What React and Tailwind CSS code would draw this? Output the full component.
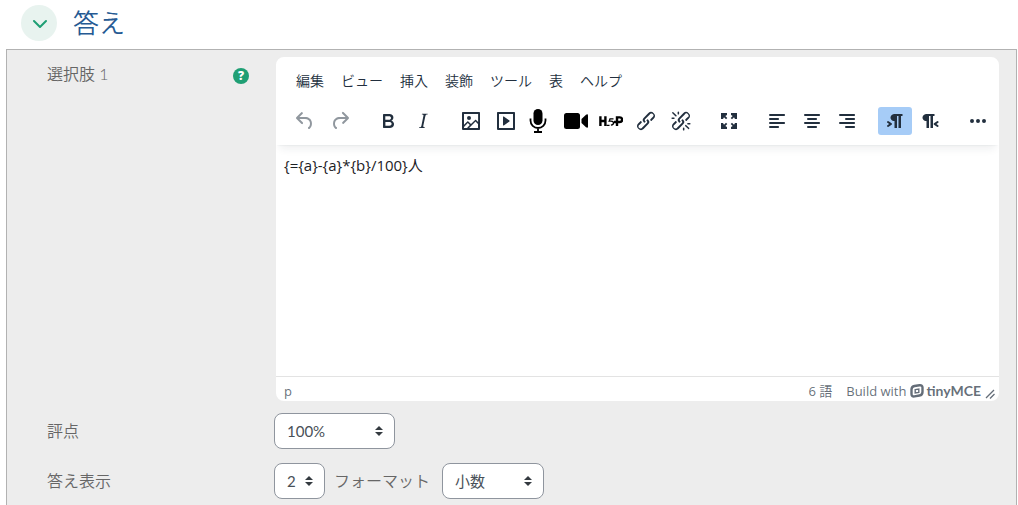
import React from "react";

const ALIGN = "h14c.6 0 1 .4 1 1s-.4 1-1 1";

const ICONS = {
  undo: "M6.4 8H12c3.7 0 6.2 2 6.8 5.1.6 2.7-.4 5.6-2.3 6.8a1 1 0 0 1-1-1.8c1.1-.6 1.8-2.7 1.4-4.6-.5-2.1-2.1-3.5-4.9-3.5H6.4l3.3 3.3a1 1 0 1 1-1.4 1.4l-5-5a1 1 0 0 1 0-1.4l5-5a1 1 0 0 1 1.4 1.4L6.4 8Z",
  redo: "M17.6 10H12c-2.8 0-4.4 1.4-4.9 3.5-.4 2 .3 4 1.4 4.6a1 1 0 1 1-1 1.8c-2-1.2-2.9-4.1-2.3-6.8.6-3 3-5.1 6.8-5.1h5.6l-3.3-3.3a1 1 0 1 1 1.4-1.4l5 5a1 1 0 0 1 0 1.4l-5 5a1 1 0 0 1-1.4-1.4l3.3-3.3Z",
  bold: "M7.8 19c-.3 0-.5 0-.6-.2l-.2-.5V5.7c0-.2 0-.4.2-.5l.6-.2h5c1.5 0 2.7.3 3.5 1 .7.6 1.1 1.4 1.1 2.5a3 3 0 0 1-.6 1.9c-.4.6-1 1-1.6 1.2.4.1.9.3 1.3.6s.8.7 1 1.2c.4.4.5 1 .5 1.6 0 1.3-.4 2.3-1.3 3-.8.7-2.1 1-3.8 1H7.8Zm5-8.3c.6 0 1.2-.1 1.6-.5.4-.3.6-.7.6-1.3 0-1.1-.8-1.7-2.3-1.7H9.3v3.5h3.4Zm.5 6c.7 0 1.3-.1 1.7-.4.4-.4.6-.9.6-1.5s-.2-1-.7-1.4c-.4-.3-1-.4-2-.4H9.4v3.8h4Z",
  italic: "m16.7 4.7-.1.9h-.3c-.6 0-1 0-1.4.3-.3.3-.4.6-.5 1.1l-2.1 9.8v.6c0 .5.4.8 1.4.8h.2l-.2.8H8l.2-.8h.2c1.1 0 1.8-.5 2-1.5l2-9.8.1-.5c0-.6-.4-.8-1.4-.8h-.3l.2-.9h5.8Z",
  image: "m5 15.7 3.3-3.2c.3-.3.7-.3 1 0L12 15l4.1-4c.3-.4.8-.4 1 0l2 1.9V5H5v10.7ZM5 18V19h3l2.8-2.9-2-2L5 17.9Zm14-3-2.5-2.4-6.4 6.5H19v-4ZM4 3h16c.6 0 1 .4 1 1v16c0 .6-.4 1-1 1H4a1 1 0 0 1-1-1V4c0-.6.4-1 1-1Zm6 8a2 2 0 1 0 0-4 2 2 0 0 0 0 4Z",
  media: "M4 3h16c.6 0 1 .4 1 1v16c0 .6-.4 1-1 1H4a1 1 0 0 1-1-1V4c0-.6.4-1 1-1Zm1 2v14h14V5H5Zm4.8 2.6 5.6 4a.5.5 0 0 1 0 .8l-5.6 4A.5.5 0 0 1 9 16V8a.5.5 0 0 1 .8-.4Z",
  link: "M6.2 12.3a1 1 0 0 1 1.4 1.4l-2 2a2 2 0 1 0 2.6 2.8l4.8-4.8a1 1 0 0 0 0-1.4 1 1 0 1 1 1.4-1.3 2.9 2.9 0 0 1 0 4L9.6 20a3.9 3.9 0 0 1-5.5-5.5l2-2Zm11.6-.6a1 1 0 0 1-1.4-1.4l2-2a2 2 0 1 0-2.6-2.8L11 10.3a1 1 0 0 0 0 1.4A1 1 0 1 1 9.6 13a2.9 2.9 0 0 1 0-4L14.4 4a3.9 3.9 0 0 1 5.5 5.5l-2 2Z",
  unlink: "M6.2 12.3a1 1 0 0 1 1.4 1.4l-2 2a2 2 0 1 0 2.6 2.8l4.8-4.8a1 1 0 0 0 0-1.4 1 1 0 1 1 1.4-1.3 2.9 2.9 0 0 1 0 4L9.6 20a3.9 3.9 0 0 1-5.5-5.5l2-2Zm11.6-.6a1 1 0 0 1-1.4-1.4l2.1-2a2 2 0 1 0-2.7-2.8L11 10.3a1 1 0 0 0 0 1.4A1 1 0 1 1 9.6 13a2.9 2.9 0 0 1 0-4L14.4 4a3.9 3.9 0 0 1 5.5 5.5l-2 2ZM7.6 6.3a.8.8 0 0 1-1 1.1L3.3 4.2a.7.7 0 1 1 1-1l3.2 3.1ZM5.1 8.6a.8.8 0 0 1 0 1.5H3a.8.8 0 0 1 0-1.5H5Zm5-3.5a.8.8 0 0 1-1.5 0V3a.8.8 0 0 1 1.5 0V5Zm6 11.8a.8.8 0 0 1 1-1l3.2 3.2a.8.8 0 0 1-1 1L16 17Zm-2.2 2a.8.8 0 0 1 1.5 0V21a.8.8 0 0 1-1.5 0V19Zm5-3.5a.7.7 0 1 1 0-1.5H21a.8.8 0 0 1 0 1.5H19Z",
  fullscreen: "M4 4h6v2L8.300 7l2 2L9 10.300l-2-2L6 10H4ZM20 4v6h-2l-1-1.700-2 2L13.700 9l2-2L14 6V4ZM4 20v-6h2l1 1.700 2-2 1.300 1.300-2 2 1.700 1v2ZM20 20h-6v-2l1.700-1-2-2 1.300-1.300 2 2 1-1.700h2Z",
  left: `M5 5${ALIGN}H5a1 1 0 1 1 0-2ZM5 9h8c.6 0 1 .4 1 1s-.4 1-1 1H5a1 1 0 1 1 0-2ZM5 13${ALIGN}H5a1 1 0 0 1 0-2ZM5 17h8c.6 0 1 .4 1 1s-.4 1-1 1H5a1 1 0 0 1 0-2Z`,
  center: `M5 5${ALIGN}H5a1 1 0 1 1 0-2ZM8 9h8c.6 0 1 .4 1 1s-.4 1-1 1H8a1 1 0 1 1 0-2ZM5 13${ALIGN}H5a1 1 0 0 1 0-2ZM8 17h8c.6 0 1 .4 1 1s-.4 1-1 1H8a1 1 0 0 1 0-2Z`,
  right: `M5 5${ALIGN}H5a1 1 0 1 1 0-2ZM11 9h8c.6 0 1 .4 1 1s-.4 1-1 1h-8a1 1 0 1 1 0-2ZM5 13${ALIGN}H5a1 1 0 0 1 0-2ZM11 17h8c.6 0 1 .4 1 1s-.4 1-1 1h-8a1 1 0 0 1 0-2Z`,
  ltr: "M11 5h8.500v2H18v12h-2.500V7h-1.500v12h-2.500v-7c-.5 0-1.400 0-1.900-.3A3.400 3.400 0 0 1 7.800 10a3.300 3.300 0 0 1 0-2.800 3.400 3.400 0 0 1 1.800-1.800L11 5ZM4.400 16.200 6.200 15l-1.800-1.200a1 1 0 0 1 1.200-1.600l3 2a1 1 0 0 1 0 1.600l-3 2a1 1 0 1 1-1.200-1.600Z",
  rtl: "M8 5h8.500v2H15v12h-2.500V7H11v12H8.500v-7c-.5 0-1.400 0-1.900-.3A3.400 3.400 0 0 1 4.800 10a3.300 3.300 0 0 1 0-2.800 3.400 3.400 0 0 1 1.800-1.800L8 5Zm12.200 11.200a1 1 0 1 1-1.200 1.600l-3-2a1 1 0 0 1 0-1.600l3-2a1 1 0 1 1 1.200 1.600L18.400 15l1.800 1.200Z",
  more: "M6 10a2 2 0 1 0 0 4 2 2 0 0 0 0-4Zm12 0a2 2 0 1 0 0 4 2 2 0 0 0 0-4Zm-6 0a2 2 0 1 0 0 4 2 2 0 0 0 0-4Z",
};

const GROUPS = [
  [["undo", "元に戻す"], ["redo", "やり直し"]],
  [["bold", "太字"], ["italic", "斜体"]],
  [["image", "画像"], ["media", "メディア"], ["mic", "音声を録音"], ["video", "動画を録画"], ["h5p", "H5P"], ["link", "リンク"], ["unlink", "リンク解除"]],
  [["fullscreen", "全画面"]],
  [["left", "左揃え"], ["center", "中央揃え"], ["right", "右揃え"]],
  [["ltr", "左から右"], ["rtl", "右から左"]],
  [["more", "さらに表示"]],
];

function Icon({ name }) {
  if (name === "mic")
    return (
      <svg width="24" height="24" viewBox="0 0 24 24" className="text-black" aria-hidden="true">
        <rect x="4.500" y="0" width="9" height="16" rx="4.500" fill="currentColor" />
        <path d="M1.500 9.500V11.500a7.500 7.500 0 0 0 15 0V9.500M9 19v4M5 23h8" fill="none" stroke="currentColor" strokeWidth="1.800" />
      </svg>
    );
  if (name === "video")
    return (
      <svg width="24" height="24" viewBox="0 0 24 24" className="text-black" fill="currentColor" aria-hidden="true">
        <rect x="0" y="4" width="16" height="16" rx="2.500" />
        <path d="M17.500 10 22 5.800q2-1.300 2 .8v10.800q0 2.100-2 .8L17.500 14Z" />
      </svg>
    );
  if (name === "h5p")
    return (
      <svg width="24" height="24" viewBox="0 0 24 24" className="text-black" fill="none" stroke="currentColor" aria-hidden="true">
        <path d="M1.400 7.200v9.800M6.400 7.200v9.800M1.400 12h5" strokeWidth="2.400" />
        <path d="M7.500 16.400h3M14.500 9.800h-3.500l-.8 2.400q4.300-.6 4.300 1.800 0 1.800-2.600 2.200" strokeWidth="1.300" />
        <path d="M18 17V8.400h2.800a2.200 2.200 0 0 1 0 4.600H15" strokeWidth="2.400" />
      </svg>
    );
  return (
    <svg width="24" height="24" viewBox="0 0 24 24" fill="currentColor" fillRule="evenodd" aria-hidden="true">
      <path d={ICONS[name]} />
    </svg>
  );
}

function ToolButton({ name, label }) {
  const disabled = name === "undo" || name === "redo";
  const active = name === "ltr";
  return (
    <button
      type="button"
      aria-label={label}
      aria-pressed={active || undefined}
      disabled={disabled}
      className={`flex h-7 w-[34px] items-center justify-center rounded-[3px] ${active ? "bg-[#a6ccf7]" : ""} ${disabled ? "text-[#222f3e]/50" : "text-[#222f3e]"}`}
    >
      <Icon name={name} />
    </button>
  );
}

function Select({ id, label, value, className }) {
  return (
    <div className={`relative ${className}`}>
      <select
        id={id}
        aria-label={label}
        defaultValue={value}
        className="block h-9 w-full appearance-none rounded-lg border border-[#8f959e] bg-white pl-3 text-[15px] font-normal text-[#495057]"
      >
        <option>{value}</option>
      </select>
      <svg className="pointer-events-none absolute top-[13px] right-3 h-[10px] w-2 text-[#343a40]" viewBox="0 0 8 10" fill="currentColor" aria-hidden="true">
        <path d="M4 0 0 4h8ZM4 10 0 6h8Z" />
      </svg>
    </div>
  );
}

function Editor() {
  return (
    <div className="overflow-hidden rounded-[10px] border-2 border-[#ededed] bg-white font-['Open_Sans','Noto_Sans_CJK_JP',sans-serif]">
      <div className="relative shadow-[0_2px_2px_-2px_rgba(34,47,62,0.1),0_8px_8px_-4px_rgba(34,47,62,0.07)]">
        <div className="flex h-12 items-center gap-[9px] px-4 text-sm text-[#222f3e]">
          {["編集", "ビュー", "挿入", "装飾", "ツール", "表", "ヘルプ"].map((m) => (
            <button key={m} type="button" className="px-1">
              {m}
            </button>
          ))}
        </div>
        <div className="flex h-10 items-start gap-[14px] px-3 pt-[2px]">
          {GROUPS.map((g) => (
            <div key={g[0][0]} className="flex gap-px">
              {g.map(([name, label]) => (
                <ToolButton key={name} name={name} label={label} />
              ))}
            </div>
          ))}
        </div>
      </div>
      <textarea
        id="choice"
        defaultValue="{={a}-{a}*{b}/100}人"
        className="block h-[231px] w-full resize-none px-2 py-2 text-[15px] leading-6 font-normal text-[#1d2125] outline-none"
      />
      <div className="flex h-[25px] items-end border-t border-[#e3e3e3] pr-1 pl-2 text-[13px] leading-5 font-normal text-[#222f3e]/70">
        <span>p</span>
        <span className="ml-auto">6 語</span>
        <a href="#tinymce" className="ml-[14px] flex items-center gap-1">
          Build with
          <span className="flex items-center gap-[2px] text-sm leading-5 font-bold font-[Lato]">
            <svg width="14" height="14" viewBox="0 0 14 14" fill="none" stroke="currentColor" aria-hidden="true">
              <path d="M4.500 2 9.500 1.300q3-.3 3 2.200v4.500q0 3-3 3.500L4.500 12.400q-3 .4-3-2.400V5.500q0-3 3-3.500Z" strokeWidth="2.400" />
              <path d="M5.200 5.600 8.800 5v3.400L5.200 9Z" strokeWidth="1.400" />
            </svg>
            tinyMCE
          </span>
        </a>
        <svg className="mb-[2px] ml-1 h-[10px] w-[10px]" viewBox="0 0 10 10" fill="none" stroke="currentColor" aria-hidden="true">
          <path d="M1 9 9 1M5 9.500 9.500 5" strokeWidth="1.300" />
        </svg>
      </div>
    </div>
  );
}

export default function App() {
  return (
    <main className="flex min-h-screen flex-col bg-white font-[Lato,'Noto_Sans_CJK_JP',sans-serif] text-[#666666]">
      <header className="mb-2 flex items-center gap-4 pt-[5px] pl-[21px]">
        <button type="button" aria-label="折りたたむ" aria-expanded="true" className="flex h-9 w-9 items-center justify-center rounded-full bg-[#e8f3ef]">
          <svg width="16" height="16" viewBox="0 0 16 16" fill="none" stroke="#1f9f74" strokeWidth="2" aria-hidden="true">
            <path d="m3 6 6 6 6-6" strokeLinecap="round" strokeLinejoin="round" />
          </svg>
        </button>
        <h2 className="text-[26px] leading-9 font-[350] text-[#265a93]">答え</h2>
      </header>
      <section className="mr-px ml-[6px] grid flex-1 grid-cols-[202px_minmax(0,1fr)] content-start gap-x-[25px] border-x border-t border-[#b2b2b2] bg-[#ededed] pt-[5px] pr-[15px] pl-10 text-base font-[350]">
        <div className="flex items-start justify-between pt-[7px]">
          <label htmlFor="choice" className="leading-6">選択肢 1</label>
          <button type="button" aria-label="ヘルプ" className="mt-[6px] flex h-4 w-4 items-center justify-center rounded-full bg-[#1f9f74] font-['Open_Sans'] text-xs leading-4 font-extrabold text-white">
            ?
          </button>
        </div>
        <Editor />

        <label htmlFor="grade" className="pt-[10px] leading-9">評点</label>
        <div className="pt-[10px]">
          <Select id="grade" label="評点" value="100%" className="w-[121px]" />
        </div>

        <label htmlFor="digits" className="pt-[14px] leading-9">答え表示</label>
        <div className="flex items-center pt-[14px]">
          <Select id="digits" label="答え表示" value="2" className="w-[51px]" />
          <label htmlFor="format" className="mr-3 ml-[9px]">フォーマット</label>
          <Select id="format" label="フォーマット" value="小数" className="w-[102px]" />
        </div>
      </section>
    </main>
  );
}
